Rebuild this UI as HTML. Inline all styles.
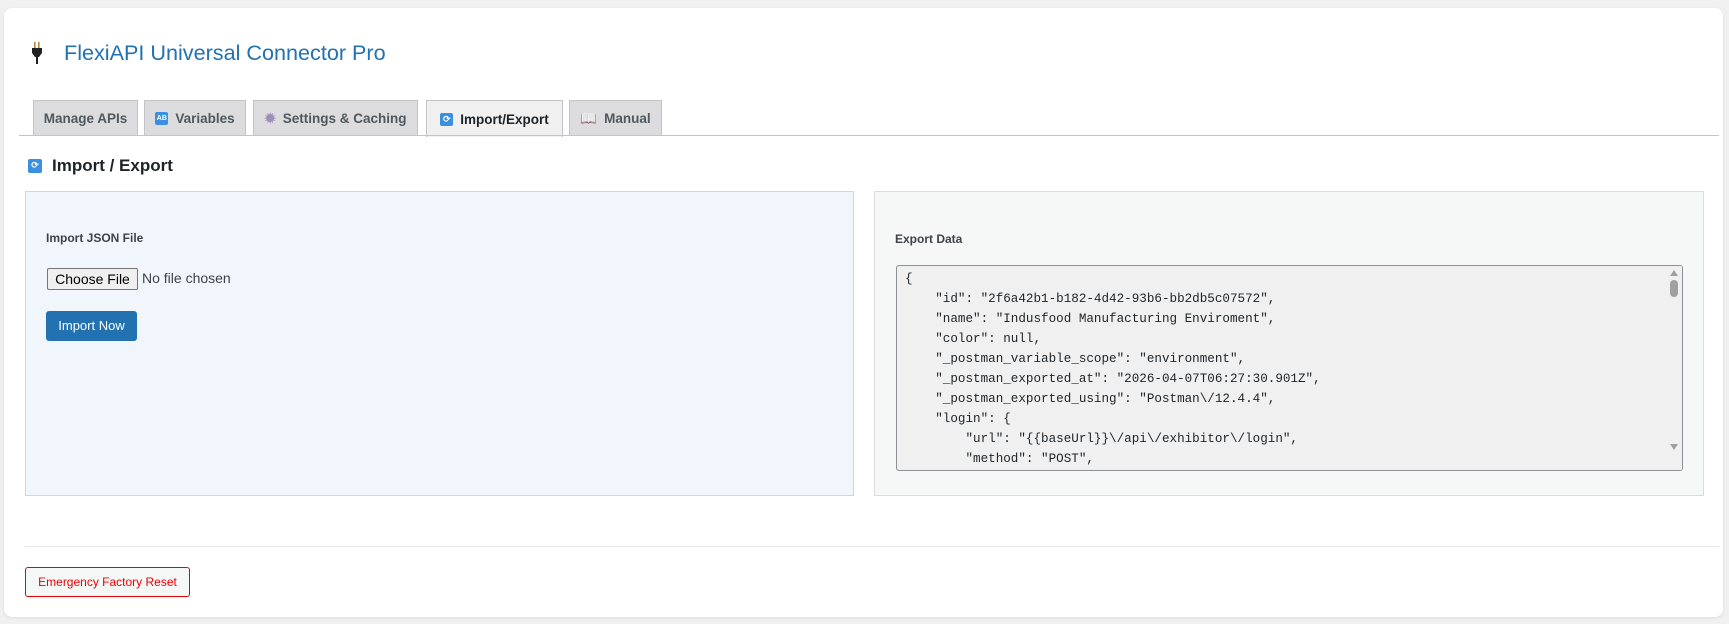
<!DOCTYPE html>
<html><head><style>
*{box-sizing:border-box;margin:0;padding:0}
body{width:1729px;height:624px;background:#f0f0f1;font-family:"Liberation Sans",sans-serif;position:relative;overflow:hidden}
.card{position:absolute;left:4px;top:8px;width:1719px;height:609px;background:#fff;border-radius:8px;box-shadow:0 1px 3px rgba(0,0,0,.08)}
.abs{position:absolute}
.title{left:31px;top:40px;font-size:21.6px;color:#2271b1;display:flex;align-items:center;gap:21px}
.tab{position:absolute;top:100px;height:36px;background:#dcdcde;border:1px solid #c3c4c7;border-bottom:none;font-size:13.5px;font-weight:bold;color:#50575e;display:flex;align-items:center;justify-content:center;gap:7px;white-space:nowrap}
.tab.act{background:#f0f0f1;color:#1d2327;height:37px}
.ico{display:inline-block;width:13px;height:13px;background:#3b8fe0;border-radius:2px;color:#fff;font-size:9px;line-height:13px;text-align:center}
.line{left:19px;top:135px;width:1700px;height:1px;background:#c3c4c7}
.panel{top:191px;height:305px}
.lbl{font-size:12px;font-weight:bold;color:#3c434a}
pre{font-family:"Liberation Mono",monospace;font-size:12.6px;line-height:20px;color:#1d2327;padding:3px 8px}
</style></head><body>
<div class="card"></div>
<div class="abs title"><svg width="12" height="22" viewBox="0 0 12 22"><rect x="3" y="0" width="1.6" height="6" fill="#b08a3c"/><rect x="7" y="0" width="1.6" height="6" fill="#b08a3c"/><path d="M1 6h10v5l-3 4H4L1 11z" fill="#222"/><rect x="5" y="14" width="2" height="8" fill="#222"/></svg><span>FlexiAPI Universal Connector Pro</span></div>
<div class="tab" style="left:33px;width:105px">Manage APIs</div>
<div class="tab" style="left:144px;width:102px"><span class="ico" style="font-size:7px">AB</span>Variables</div>
<div class="tab" style="left:253px;width:165px"><span style="color:#9b8fb8">✹</span>Settings &amp; Caching</div>
<div class="tab act" style="left:426px;width:137px"><span class="ico">⟳</span>Import/Export</div>
<div class="tab" style="left:569px;width:93px"><span style="color:#6aa0d8">📖</span>Manual</div>
<div class="abs line"></div>
<div class="abs" style="left:28px;top:156px;font-size:17px;font-weight:bold;color:#1d2327;display:flex;align-items:center;gap:10px"><span class="ico" style="width:14px;height:14px">⟳</span>Import / Export</div>
<div class="abs panel" style="left:25px;width:829px;background:#f0f6fc;border:1px solid #c5d9ed"></div>
<div class="abs lbl" style="left:46px;top:231px">Import JSON File</div>
<div class="abs" style="left:47px;top:268px;width:91px;height:22px;border:1px solid #767676;border-radius:2px;background:#efefef;font-size:14px;text-align:center;line-height:20px;color:#000">Choose File</div>
<div class="abs" style="left:142px;top:270px;font-size:14px;color:#3c434a">No file chosen</div>
<div class="abs" style="left:46px;top:311px;width:91px;height:30px;background:#2271b1;border-radius:3px;color:#fff;font-size:13px;text-align:center;line-height:30px">Import Now</div>
<div class="abs panel" style="left:874px;width:830px;background:#f6f7f7;border:1px solid #dcdcde"></div>
<div class="abs lbl" style="left:895px;top:232px">Export Data</div>
<div class="abs" style="left:896px;top:265px;width:787px;height:206px;background:#f0f0f1;border:1px solid #8c8f94;border-radius:3px;overflow:hidden">
<pre>{
    "id": "2f6a42b1-b182-4d42-93b6-bb2db5c07572",
    "name": "Indusfood Manufacturing Enviroment",
    "color": null,
    "_postman_variable_scope": "environment",
    "_postman_exported_at": "2026-04-07T06:27:30.901Z",
    "_postman_exported_using": "Postman\/12.4.4",
    "login": {
        "url": "{{baseUrl}}\/api\/exhibitor\/login",
        "method": "POST",</pre>
<div class="abs" style="right:0;top:0;width:16px;height:204px;background:#f0f0f1"><div style="margin:4px auto;width:0;border:4px solid transparent;border-bottom:6px solid #a0a0a0;border-top:0"></div><div style="margin:4px auto;width:8px;height:17px;background:#a0a0a0;border-radius:4px"></div><div class="abs" style="left:4px;top:178px;border:4px solid transparent;border-top:6px solid #a0a0a0;border-bottom:0"></div></div>
</div>
<div class="abs" style="left:25px;top:546px;width:1694px;height:1px;background:#e5e5e5"></div>
<div class="abs" style="left:25px;top:567px;width:165px;height:30px;border:1px solid #e00;border-radius:3px;background:#f6f7f7;color:#e00;font-size:12px;text-align:center;line-height:28px">Emergency Factory Reset</div>
</body></html>
